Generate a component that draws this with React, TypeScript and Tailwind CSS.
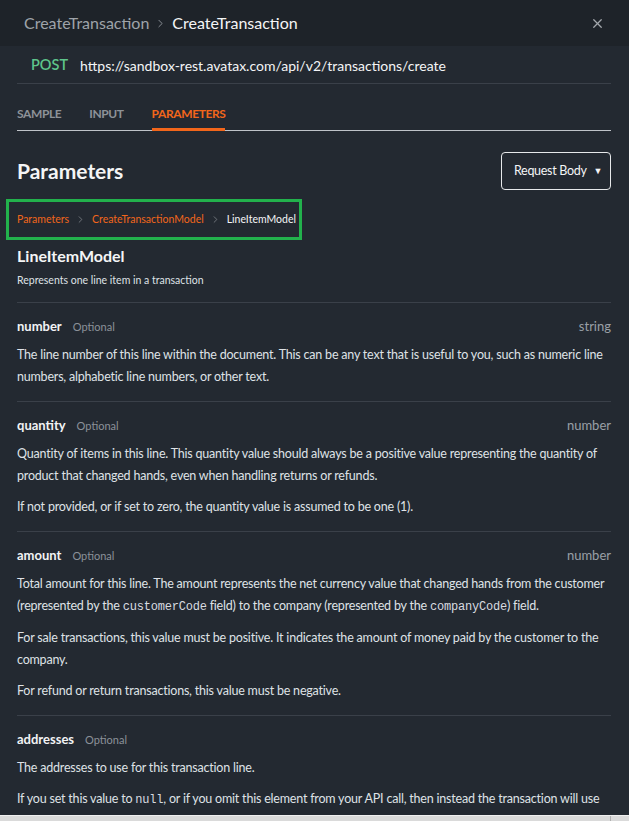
import { ChevronRight, X } from 'lucide-react';

const FONT = { fontFamily: 'Lato, "Noto Sans", sans-serif' };

type Field = {
  name: string;
  type?: string;
  paras: React.ReactNode[];
};

const code = (s: string) => (
  <code className="font-['Liberation_Mono',monospace] text-[12px] text-[#d8dbe0]">{s}</code>
);

const fields: Field[] = [
  {
    name: 'number',
    type: 'string',
    paras: [
      'The line number of this line within the document. This can be any text that is useful to you, such as numeric line numbers, alphabetic line numbers, or other text.',
    ],
  },
  {
    name: 'quantity',
    type: 'number',
    paras: [
      'Quantity of items in this line. This quantity value should always be a positive value representing the quantity of product that changed hands, even when handling returns or refunds.',
      'If not provided, or if set to zero, the quantity value is assumed to be one (1).',
    ],
  },
  {
    name: 'amount',
    type: 'number',
    paras: [
      <>Total amount for this line. The amount represents the net currency value that changed hands from the customer (represented by the {code('customerCode')} field) to the company (represented by the {code('companyCode')}) field.</>,
      'For sale transactions, this value must be positive. It indicates the amount of money paid by the customer to the company.',
      'For refund or return transactions, this value must be negative.',
    ],
  },
  {
    name: 'addresses',
    paras: [
      'The addresses to use for this transaction line.',
      <>If you set this value to {code('null')}, or if you omit this element from your API call, then instead the transaction will use the addresses from the document level.</>,
    ],
  },
];

function FieldRow({ f }: { f: Field }) {
  return (
    <div className="border-t border-[#3a4049] pt-[14px] pb-[13px]">
      <div className="h-[20px] flex items-center">
        <span className="text-[13px] font-bold text-[#f2f3f5]">{f.name}</span>
        <span className="ml-[11px] text-[11px] text-[#8b9199]">Optional</span>
        {f.type && <span className="ml-auto text-[13px] text-[#9aa0a7]">{f.type}</span>}
      </div>
      <div className="mt-[7px] flex flex-col gap-[9px]">
        {f.paras.map((p, i) => (
          <p key={i} className="text-[12.5px] tracking-[-0.2px] leading-[22px] text-[#dfe2e6]">{p}</p>
        ))}
      </div>
    </div>
  );
}

export default function App() {
  return (
    <div className="relative w-[629px] h-[821px] overflow-hidden bg-[#232931] flex flex-col" style={FONT}>
      {/* Title bar */}
      <div className="h-[46px] shrink-0 bg-[#1e2329] flex items-center px-[24px]">
        <span className="text-[16px] text-[#9ea3a9]">CreateTransaction</span>
        <ChevronRight className="w-[13px] h-[13px] mx-[5px] text-[#9ea3a9]" strokeWidth={1.5} />
        <span className="text-[16px] text-[#f4f5f6]">CreateTransaction</span>
        <X className="ml-auto w-[15px] h-[15px] text-[#a3a7ac]" strokeWidth={2} />
      </div>

      <div className="pl-[17px] pr-[18px] flex flex-col">
        {/* Endpoint */}
        <div className="h-[38px] pt-[1px] flex items-center pl-[14px] border-b border-[#3a4049]">
          <span className="text-[14.5px] font-semibold text-[#5ec48b]">POST</span>
          <span className="ml-[12px] text-[14px] text-[#f4f5f6]">https://sandbox-rest.avatax.com/api/v2/transactions/create</span>
        </div>

        {/* Tabs */}
        <div className="pt-[22px] flex gap-[28px] border-b border-[#bfc3c8]">
          <div className="pb-[6px] leading-[16px] border-b-[3px] border-transparent -mb-px text-[12px] tracking-[-0.4px] font-bold text-[#8d9298]">SAMPLE</div>
          <div className="pb-[6px] leading-[16px] border-b-[3px] border-transparent -mb-px text-[12px] tracking-[-0.4px] font-bold text-[#8d9298]">INPUT</div>
          <div className="pb-[6px] leading-[16px] border-b-[3px] border-[#f2661b] -mb-px text-[12px] tracking-[-0.4px] font-bold text-[#f2661b]">PARAMETERS</div>
        </div>

        {/* Heading */}
        <div className="mt-[21px] h-[38px] flex items-center justify-between">
          <h1 className="text-[21px] font-bold text-[#f4f5f6]">Parameters</h1>
          <button className="h-[38px] w-[110px] border border-[#e6e8ea] rounded-[4px] flex items-center pl-[12px] text-[12.5px] tracking-[-0.3px] text-[#f4f5f6]">
            Request Body
            <span className="ml-[7px] text-[9px]">▼</span>
          </button>
        </div>

        {/* Breadcrumb */}
        <div className="mt-[9px] -ml-[11px] w-[296px] h-[41px] border-[3px] border-[#22b14c] flex items-center pl-[8px] text-[10.5px]">
          <span className="text-[#f2661b]">Parameters</span>
          <ChevronRight className="w-[11px] h-[11px] mx-[6px] text-[#8d9298]" strokeWidth={1.5} />
          <span className="text-[#f2661b]">CreateTransactionModel</span>
          <ChevronRight className="w-[11px] h-[11px] mx-[6px] text-[#8d9298]" strokeWidth={1.5} />
          <span className="text-[#f4f5f6]">LineItemModel</span>
        </div>

        <div className="mt-[6px] text-[16px] leading-[20px] font-bold text-[#f4f5f6]">LineItemModel</div>
        <div className="mt-[6px] text-[10.5px] leading-[16px] text-[#dfe2e6]">Represents one line item in a transaction</div>

        <div className="mt-[14px]">
          {fields.map(f => <FieldRow key={f.name} f={f} />)}
        </div>
      </div>

      {/* Horizontal scrollbar strip */}
      <div className="absolute left-0 right-0 bottom-0 h-[6px] bg-[#dadada] border-t border-[#f0f0f0] flex justify-end">
        <div className="w-[19px] border-l border-[#b0b0b0]" />
      </div>
    </div>
  );
}
